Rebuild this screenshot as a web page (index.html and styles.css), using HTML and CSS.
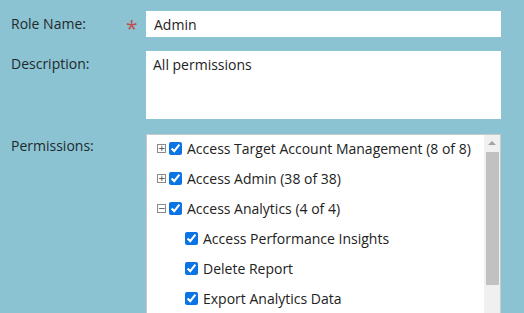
FILE: index.html
```html
<!DOCTYPE html>
<html lang="en">
<head>
    <meta charset="UTF-8">
    <meta name="viewport" content="width=device-width, initial-scale=1.0">
    <title>Role</title>
    <link rel="stylesheet" href="styles.css">
</head>
<body>
    <div class="role-form">
        <label class="form-label" for="role-name">Role Name:</label>
        <span class="required">*</span>
        <input class="text-field" type="text" id="role-name" value="Admin">

        <label class="form-label" for="description">Description:</label>
        <span></span>
        <textarea class="text-area" id="description">All permissions</textarea>

        <label class="form-label perm-label">Permissions:</label>
        <span></span>
        <div class="perm-box">
            <ul class="perm-tree">
                <li class="perm-item">
                    <span class="toggle">+</span>
                    <input type="checkbox" checked>
                    <span>Access Target Account Management (8 of 8)</span>
                </li>
                <li class="perm-item">
                    <span class="toggle">+</span>
                    <input type="checkbox" checked>
                    <span>Access Admin (38 of 38)</span>
                </li>
                <li class="perm-item">
                    <span class="toggle">&minus;</span>
                    <input type="checkbox" checked>
                    <span>Access Analytics (4 of 4)</span>
                </li>
                <li class="perm-item child">
                    <input type="checkbox" checked>
                    <span>Access Performance Insights</span>
                </li>
                <li class="perm-item child">
                    <input type="checkbox" checked>
                    <span>Delete Report</span>
                </li>
                <li class="perm-item child">
                    <input type="checkbox" checked>
                    <span>Export Analytics Data</span>
                </li>
            </ul>
            <div class="scrollbar">
                <span class="scroll-up"></span>
                <span class="scroll-thumb"></span>
            </div>
        </div>
    </div>
</body>
</html>
```

FILE: styles.css
```css
* {
    margin: 0;
    padding: 0;
    box-sizing: border-box;
}

html {
    overflow: hidden;
}

body {
    background-color: #8bc3d3;
    color: #222;
    font-family: "Open Sans", Arial, sans-serif;
    font-size: 14px;
    padding: 11px 0 0 11px;
}

/* Grille: libellé, astérisque, champ */
.role-form {
    display: grid;
    grid-template-columns: 115px 20px 355px;
    row-gap: 14px;
    align-items: start;
}

.form-label {
    line-height: 26px;
    color: #1f2a2a;
}

.required {
    color: #c0504d;
    font-size: 21px;
    line-height: 34px;
    height: 26px;
}

.text-field,
.text-area {
    width: 355px;
    border: none;
    background: #ffffff;
    font-family: inherit;
    font-size: 14px;
    color: #222;
    outline: none;
}

.text-field {
    height: 26px;
    padding: 0 8px;
}

.text-area {
    height: 68px;
    padding: 4px 7px;
    resize: none;
}

/* Boîte des permissions */
.perm-box {
    margin-top: 1px;
    width: 355px;
    height: 185px;
    background: #ffffff;
    border: 1px solid #c9c9c9;
    display: flex;
}

.perm-tree {
    list-style: none;
    flex: 1;
    padding-left: 10px;
}

.perm-item {
    display: flex;
    align-items: center;
    height: 30px;
    padding-bottom: 4px;
    white-space: nowrap;
}

.perm-item.child {
    padding-left: 28px;
}

.perm-item input {
    width: 13px;
    height: 13px;
    margin: 0 5px 0 0;
    accent-color: #0b74e5;
}

.toggle {
    width: 9px;
    height: 9px;
    border: 1px solid #8a8a8a;
    color: #444;
    font-size: 9px;
    line-height: 6px;
    text-align: center;
    font-family: "DejaVu Sans", sans-serif;
    margin-right: 3px;
}

/* Barre de défilement */
.scrollbar {
    width: 16px;
    background: #f0f0f0;
    display: flex;
    flex-direction: column;
    align-items: center;
}

.scroll-up {
    margin-top: 6px;
    width: 0;
    height: 0;
    border-left: 4px solid transparent;
    border-right: 4px solid transparent;
    border-bottom: 4px solid #a3a3a3;
}

.scroll-thumb {
    margin-top: 7px;
    width: 13px;
    height: 133px;
    background: #c1c1c1;
}
```
